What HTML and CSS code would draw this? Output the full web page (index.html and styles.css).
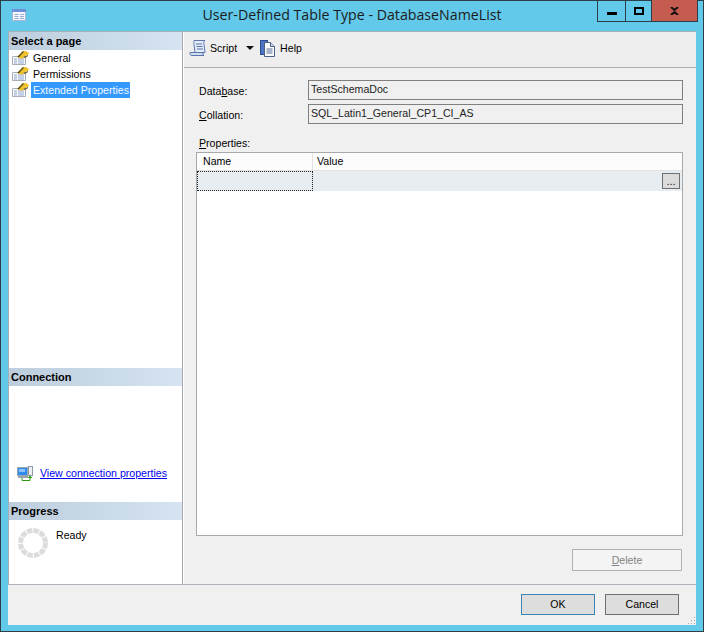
FILE: index.html
```html
<!DOCTYPE html>
<html lang="en">
<head>
<meta charset="utf-8">
<title>User-Defined Table Type - DatabaseNameList</title>
<link rel="stylesheet" href="styles.css">
</head>
<body>
<svg class="defs" width="0" height="0" aria-hidden="true">
  <symbol id="page" viewBox="0 0 17 16">
    <path d="M0.500 6.500h13v8h-13z" fill="#fbfcfe" stroke="#a9aeb8"/>
    <path d="M2 9h3M2 11h3M2 13h3M6 9h6M6 11h6M6 13h6" stroke="#8fa4d0"/>
    <path d="M5 7l4-4 2-2 3 0 3 2-1 2-3 1-3 3z" fill="#f0c22e"/>
    <path d="M5 7l4-4 2-2 1 1-3 3-2 2.500zM11 7l3-1 2-1 0 1-3 2z" fill="#5f5524"/>
  </symbol>
</svg>
<div class="window">
  <header class="titlebar">
    <svg class="app-icon" width="16" height="14" viewBox="0 0 16 14"><rect x="1.500" y="1.500" width="13" height="11" fill="#f4f7fb" stroke="#a5b6d8"/><rect x="1" y="1" width="14" height="3" fill="#6f8fd6"/><path d="M3.500 6.500h4M3.500 8.500h4M3.500 10.500h4M9 6.500h4M9 8.500h4M9 10.500h4" stroke="#9aaccc"/></svg>
    <h1 class="title">User-Defined Table Type - DatabaseNameList</h1>
    <div class="controls">
      <div class="ctl ctl-min"><span class="min-glyph"></span></div>
      <div class="ctl ctl-max"><span class="max-glyph"></span></div>
      <div class="ctl ctl-close"><svg width="9" height="8" viewBox="0 0 9 8"><path d="M1 0l3.500 3L8 0M1 8l3.500-3L8 8" fill="none" stroke="#111" stroke-width="2"/></svg></div>
    </div>
  </header>
  <div class="client">
    <div class="main">
      <aside class="side">
        <div class="side-top">
          <div class="side-head">Select a page</div>
          <ul class="pages">
            <li class="page-row"><svg class="page-icon" width="17" height="16"><use href="#page"/></svg><span class="page-label">General</span></li>
            <li class="page-row"><svg class="page-icon" width="17" height="16"><use href="#page"/></svg><span class="page-label">Permissions</span></li>
            <li class="page-row"><svg class="page-icon" width="17" height="16"><use href="#page"/></svg><span class="page-label is-selected">Extended Properties</span></li>
          </ul>
        </div>
        <div class="side-conn">
          <div class="side-head">Connection</div>
          <div class="conn-body">
            <svg width="17" height="16" viewBox="0 0 17 16"><rect x="0.500" y="2.500" width="10" height="8" fill="#2f8aee" stroke="#9aa6b4"/><rect x="2" y="4" width="6" height="3" fill="#8cc4f8"/><rect x="1" y="11" width="10" height="2" fill="#9aa2ac"/><rect x="11.500" y="1.500" width="4" height="9" fill="#eef0f3" stroke="#8c9aab"/><path d="M5 13v2.500h8V12" fill="none" stroke="#2c9a12"/><path d="M10.500 13l2.500-2.500 2.500 2.500z" fill="#2c9a12"/></svg>
            <a class="conn-link" href="#">View connection properties</a>
          </div>
        </div>
        <div class="side-progress">
          <div class="side-head">Progress</div>
          <div class="progress-body">
            <svg width="32" height="32" viewBox="0 0 32 32"><circle cx="16" cy="16" r="12.500" fill="none" stroke="#dcdcdc" stroke-width="5" stroke-dasharray="5.500 1.050"/></svg>
            <span class="ready">Ready</span>
          </div>
        </div>
      </aside>
      <section class="content">
        <div class="toolbar">
          <svg width="18" height="18" viewBox="0 0 18 18"><path d="M5 1.500h11c-1.500 1-1.500 2.500-1 4l1 8H6l-1-8c-.5-1.500 0-3 0-4z" fill="#e6ecf7" stroke="#5a75ad"/><path d="M1 13.500h12c1 0 1 3 2 3H3c-1.500 0-2.500-1.500-2-3z" fill="#cfdcf2" stroke="#5a75ad"/><path d="M7 5h6M7.500 7.500h6M8 10h6" stroke="#5a75ad"/></svg>
          <span class="tool-label">Script</span>
          <span class="caret"></span>
          <svg class="help-icon" width="17" height="18" viewBox="0 0 17 18"><rect x="0.500" y="1.500" width="7" height="14" fill="#4e74c4" stroke="#2f4d8f"/><path d="M4.500 3.500h6l4 4v10h-10z" fill="#fafbfd" stroke="#4b5f87"/><path d="M10.500 3.500v4h4" fill="#cfdaf0" stroke="#4b5f87"/><path d="M6.500 10h6M6.500 12h6M6.500 14h6" stroke="#5a6f9a"/></svg>
          <span class="tool-label">Help</span>
        </div>
        <div class="form">
          <div class="field-grid">
            <label class="field-label">Data<u>b</u>ase:</label>
            <div class="field">TestSchemaDoc</div>
            <label class="field-label"><u>C</u>ollation:</label>
            <div class="field">SQL_Latin1_General_CP1_CI_AS</div>
          </div>
          <div class="props-label"><u>P</u>roperties:</div>
          <div class="grid-table">
            <div class="grid-head">
              <div class="cell-name">Name</div>
              <div class="cell-value">Value</div>
            </div>
            <div class="grid-row">
              <div class="cell-focus"></div>
              <div class="cell-rest"><button class="dots" type="button">...</button></div>
            </div>
          </div>
          <div class="delete-row"><button class="btn-delete" type="button" disabled><u>D</u>elete</button></div>
        </div>
      </section>
    </div>
    <footer class="footer">
      <button class="btn btn-ok" type="button">OK</button>
      <button class="btn" type="button">Cancel</button>
      <svg class="grip" width="9" height="9" viewBox="0 0 9 9"><path d="M7 1h1v1H7zM4 4h1v1H4zM7 4h1v1H7zM1 7h1v1H1zM4 7h1v1H4zM7 7h1v1H7z" fill="#a9a9a9"/></svg>
    </footer>
  </div>
</div>
</body>
</html>
```
FILE: styles.css
```css
* { box-sizing: border-box; }
html, body { margin: 0; padding: 0; }
body {
  width: 704px;
  height: 632px;
  overflow: hidden;
  font-family: "Liberation Sans", Arial, sans-serif;
  font-size: 10.6px;
  color: #000;
}
.defs { position: absolute; }
.window {
  width: 704px;
  height: 632px;
  background: #63c9ea;
  border: 1px solid #2c3e48;
  display: flex;
  flex-direction: column;
}
.titlebar {
  position: relative;
  height: 30px;
  flex: none;
}
.app-icon { position: absolute; left: 10px; top: 7px; }
.title {
  margin: 0;
  padding-top: 4px;
  text-align: center;
  font-family: "Open Sans", "Noto Sans", sans-serif;
  font-weight: 400;
  font-size: 14.2px;
  line-height: 20px;
  color: #1b1b1b;
}
.controls {
  position: absolute;
  top: -1px;
  right: 5px;
  height: 22px;
  display: flex;
  border: 1px solid #2c3e48;
  border-top: 0;
}
.ctl {
  display: flex;
  align-items: center;
  justify-content: center;
  height: 100%;
}
.ctl-min { width: 28px; border-right: 1px solid #2c3e48; }
.ctl-max { width: 26px; border-right: 1px solid #2c3e48; }
.ctl-close { width: 45px; background: #c45c50; }
.min-glyph { width: 10px; height: 3px; background: #000; margin-top: 5px; }
.max-glyph { width: 10px; height: 8px; border: 2px solid #000; }
.client {
  flex: 1;
  margin: 0 7px 6px;
  display: flex;
  flex-direction: column;
  background: #f0f0f0;
  min-height: 0;
}
.main {
  height: 554px;
  flex: none;
  display: flex;
  border-top: 1px solid #a6aeb6;
  border-bottom: 1px solid #b0b0b8;
}
.side {
  width: 175px;
  flex: none;
  display: flex;
  flex-direction: column;
  background: #fff;
  border-left: 1px solid #a6aeb6;
  border-right: 1px solid #a8a8b0;
}
.side-top { height: 336px; flex: none; }
.side-conn { height: 134px; flex: none; }
.side-progress { flex: 1; }
.side-head {
  height: 18px;
  padding-left: 2px;
  font-weight: 700;
  line-height: 18px;
  font-size: 11px;
  background: linear-gradient(to right, #bccddd, #d6e4f1);
}
.pages {
  list-style: none;
  margin: 0;
  padding: 0;
}
.page-row {
  height: 16px;
  display: flex;
  align-items: center;
  padding-left: 3px;
}
.page-icon { flex: none; }
.page-label {
  margin-left: 2px;
  padding: 0 2px;
  height: 16px;
  line-height: 16px;
}
.is-selected { background: #3399ff; color: #f4f8ff; width: 99px; white-space: nowrap; }
.conn-body {
  display: flex;
  align-items: center;
  gap: 6px;
  padding: 79px 0 0 8px;
}
.conn-link { color: #0000ee; text-decoration: underline; }
.progress-body {
  display: flex;
  align-items: flex-start;
  padding: 7px 0 0 8px;
}
.ready { margin-left: 7px; line-height: 16px; }
.content {
  flex: 1;
  min-width: 0;
  display: flex;
  flex-direction: column;
  border-left: 1px solid #fff;
}
.toolbar {
  height: 36px;
  flex: none;
  display: flex;
  align-items: center;
  padding: 0 0 3px 5px;
  border-bottom: 1px solid #aeaeae;
  background: #eeeeee;
}
.tool-label { margin-left: 3px; line-height: 16px; }
.caret {
  margin-left: 9px;
  border-left: 4px solid transparent;
  border-right: 4px solid transparent;
  border-top: 4px solid #111;
}
.help-icon { margin-left: 6px; }
.form {
  flex: 1;
  padding: 12px 13px 0 12px;
  display: flex;
  flex-direction: column;
}
.field-grid {
  display: grid;
  grid-template-columns: 109px 375px;
  row-gap: 4px;
  margin-left: 3px;
}
.field-label { line-height: 20px; height: 20px; padding-top: 1px; }
.field {
  height: 20px;
  line-height: 17px;
  padding-left: 2px;
  border: 1px solid #7f7f7f;
  background: #f0f0f0;
  color: #222;
}
.props-label { margin-top: 11px; height: 17px; line-height: 16px; padding-left: 3px; }
.grid-table {
  height: 384px;
  width: 487px;
  background: #fff;
  border: 1px solid #a9a9a9;
}
.grid-head {
  height: 18px;
  display: flex;
  background: #fcfcfc;
  border-bottom: 1px solid #e3e3e3;
  line-height: 17px;
}
.cell-name { width: 116px; padding-left: 6px; border-right: 1px solid #e3e3e3; }
.cell-value { padding-left: 4px; }
.grid-row {
  height: 20px;
  display: flex;
  background: #e8edf1;
}
.cell-focus { width: 116px; height: 20px; border: 1px dotted #222; }
.cell-rest {
  flex: 1;
  display: flex;
  justify-content: flex-end;
  align-items: flex-start;
  padding: 2px 2px 0 0;
}
.dots {
  width: 18px;
  height: 16px;
  padding: 0;
  background: #dcdcdc;
  border: 1px solid #707070;
  font: 11px/12px "Liberation Sans", Arial, sans-serif;
  color: #111;
}
.delete-row {
  display: flex;
  justify-content: flex-end;
  padding-top: 13px;
  width: 486px;
}
.btn-delete {
  width: 110px;
  height: 22px;
  padding: 0;
  background: #f4f4f4;
  border: 1px solid #adb2b5;
  color: #838383;
  font: 10.6px/18px "Liberation Sans", Arial, sans-serif;
}
.footer {
  position: relative;
  flex: 1;
  display: flex;
  justify-content: flex-end;
  align-items: flex-start;
  gap: 10px;
  padding: 9px 17px 0 0;
}
.btn {
  width: 74px;
  height: 21px;
  padding: 0;
  background: #dddddd;
  border: 1px solid #707070;
  font: 10.6px/17px "Liberation Sans", Arial, sans-serif;
  color: #000;
}
.btn-ok { border-color: #3b83b5; }
.grip { position: absolute; right: 0; bottom: 0; }
```
